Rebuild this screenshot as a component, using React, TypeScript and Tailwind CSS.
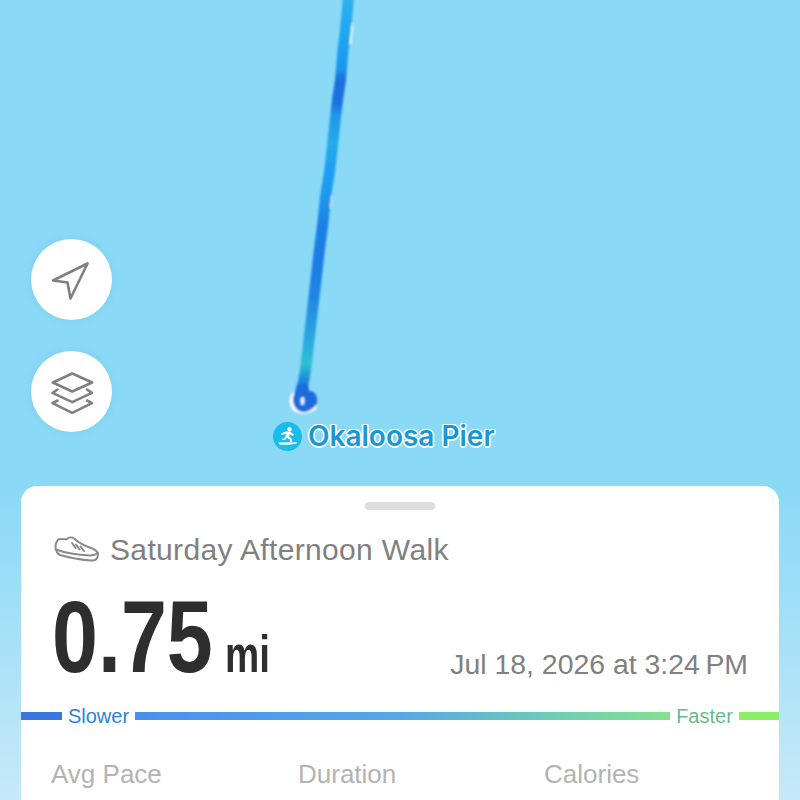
const SANS = "font-['Liberation_Sans',Arial,sans-serif]";

function Route() {
  return (
    <svg className="absolute left-0 top-0" width="800" height="486" viewBox="0 0 800 486" fill="none">
      <defs>
        <linearGradient id="route" gradientUnits="userSpaceOnUse" x1="0" y1="0" x2="0" y2="400">
          <stop offset="0" stopColor="#2bb0ee" />
          <stop offset="0.1" stopColor="#1ea5ee" />
          <stop offset="0.17" stopColor="#1d96ec" />
          <stop offset="0.2" stopColor="#1c70de" />
          <stop offset="0.26" stopColor="#1d72de" />
          <stop offset="0.29" stopColor="#1e9ae8" />
          <stop offset="0.36" stopColor="#25aaea" />
          <stop offset="0.42" stopColor="#1ea0f2" />
          <stop offset="0.5" stopColor="#1d98ee" />
          <stop offset="0.56" stopColor="#1a80e4" />
          <stop offset="0.65" stopColor="#1c7de2" />
          <stop offset="0.74" stopColor="#1e86e4" />
          <stop offset="0.82" stopColor="#2a9fe0" />
          <stop offset="0.88" stopColor="#2cb4dc" />
          <stop offset="0.91" stopColor="#2ec0d0" />
          <stop offset="0.95" stopColor="#1e88e0" />
          <stop offset="1" stopColor="#1b6cdc" />
        </linearGradient>
        <filter id="soft" x="-20%" y="-5%" width="140%" height="110%">
          <feGaussianBlur stdDeviation="0.8" />
        </filter>
      </defs>
      <g filter="url(#soft)">
        <path d="M352 24 L350.500 44" stroke="#fff" strokeWidth="2" />
        <path d="M331 196 L330 208" stroke="#fff" strokeWidth="2" />
        <path d="M293 392 C288 397 288 408 296 412 C302 415 311 414 317 408 L312 400 L296 396 Z" fill="#fff" />
        <path
          d="M348.500 -3 L347 14 L345.500 30 L343 50 L340.500 80 L337.500 100 L335 122 L332 150 L329.500 172 L325.500 197 L323 222 L319 253 L316 280 L312.500 310 L309 340 L305.500 370 L302 390"
          stroke="url(#route)"
          strokeWidth="11"
          strokeLinejoin="round"
          strokeLinecap="round"
        />
        <path
          d="M297 384 L308 384 L309 391 C314 390 318 396 317 402 C315.500 408 308 413 302 412 C296 411 292.500 404 293 399 C293.500 394 296 391 297 384 Z"
          fill="#1b6cdc"
        />
        <ellipse cx="302.500" cy="401" rx="2" ry="4" fill="#e8f6ff" />
      </g>
    </svg>
  );
}

function PierLabel() {
  return (
    <div className="absolute left-[273px] top-[421px] flex items-center gap-[6px]">
      <div className="flex h-[29px] w-[29px] items-center justify-center rounded-full bg-[#19bdeb]">
        <svg width="21" height="21" viewBox="0 0 21 21" fill="#fff">
          <circle cx="12.500" cy="3.200" r="2.200" />
          <path d="M4 7.500 L9 5.600 L13 5.600 L17 8.600 L16 10 L12.800 8.200 L12 10.600 L14.800 12.800 L14.800 16 L13 16 L12.800 13.600 L9.600 11.800 L8 14 L5.400 14 L5.400 12.600 L7.200 12.400 L9.600 7.800 L4.600 9 Z" />
          <path d="M1 16.600 L20 16.200 L20 17.200 C15 18.800 7 19 2.500 18.400 Z" />
        </svg>
      </div>
      <span className="font-['Inter',sans-serif] text-[28px] font-semibold leading-[30px] text-[#1897d6] whitespace-nowrap [text-shadow:1.5px_0_0_#fff,-1.5px_0_0_#fff,0_1.5px_0_#fff,0_-1.5px_0_#fff,1px_1px_0_#fff,-1px_-1px_0_#fff,1px_-1px_0_#fff,-1px_1px_0_#fff]">
        Okaloosa Pier
      </span>
    </div>
  );
}

function MapButton({ children }: { children: React.ReactNode }) {
  return (
    <div className="flex h-[81px] w-[81px] items-center justify-center rounded-full bg-white shadow-[0_0_8px_rgba(60,120,150,0.12)]">
      {children}
    </div>
  );
}

function Shoe() {
  return (
    <svg className="mb-[3px]" width="46" height="28" viewBox="0 0 46 28" fill="none" stroke="#8a8a8a" strokeWidth="2" strokeLinejoin="round" strokeLinecap="round">
      <path d="M2 15 C1 11 2 7 4 4.500 C7 3 11 5 13 4 C15 2 18 2 20 3.500 C25 8 31 11 37 13 C41 14.500 44 16 44 19.500 C44 24 41 26 37 25.500 C27 25 15 22.500 6 20 C4 19 2.500 17 2 15 Z" />
      <path d="M2 14.500 C10 17.500 24 20 36 20.500 C39 20.500 42 19.500 44 18" />
      <path d="M18 8 L21.500 13 M22 9.500 L25.500 14.500 M26.500 11.500 L30 16" />
    </svg>
  );
}

export default function App() {
  return (
    <div className={`flex h-[800px] w-[800px] flex-col overflow-hidden bg-[linear-gradient(to_bottom,#8ad9f7_0,#8ad9f7_490px,#c6e9f7_800px)] ${SANS}`}>
      <div className="relative h-[486px] shrink-0 pl-[31px] pt-[239px]">
        <Route />
        <PierLabel />
        <div className="relative flex w-[81px] flex-col gap-[31px]">
          <MapButton>
            <svg width="40" height="40" viewBox="0 0 40 40" fill="none" stroke="#808080" strokeWidth="2.600" strokeLinejoin="round" strokeLinecap="round">
              <path d="M35.500 3.500 L1 20.500 L15.500 22.500 L18.500 38.500 Z" />
            </svg>
          </MapButton>
          <MapButton>
            <svg className="overflow-visible" width="42" height="42" viewBox="0 0 42 42" fill="none" stroke="#808080" strokeWidth="2.600" strokeLinejoin="round" strokeLinecap="round">
              <path d="M21.200 2.500 L41.200 11.500 L21.200 20.500 L1.800 11.500 Z" />
              <path d="M6.500 18.500 L1.500 21.800 L21.200 31.200 L41 21.800 L36 18.500" />
              <path d="M6.500 29.500 L1.500 32.200 L21.200 41.800 L41 32.200 L36 29.500" />
            </svg>
          </MapButton>
        </div>
      </div>

      <div className="mx-[21px] flex flex-1 flex-col rounded-t-[16px] bg-white">
        <div className="mx-auto mt-[16px] h-[8px] w-[70px] rounded-full bg-[#dedede]" />
        <div className="ml-[33px] mt-[24px] flex h-[32px] items-center gap-[10px]">
          <Shoe />
          <span className="text-[30px] leading-[32px] tracking-[0.35px] text-[#808080] whitespace-nowrap">Saturday Afternoon Walk</span>
        </div>
        <div className="ml-[31px] mr-[31px] mt-[16px] flex h-[110px] items-end justify-between">
          <div className="flex items-baseline gap-[13px] text-[#2e2e2e]">
            <span className="inline-block w-[160px] origin-left scale-x-[0.81] whitespace-nowrap text-[102px] font-bold leading-[110px]">0.75</span>
            <span className="inline-block w-[45px] origin-left scale-x-[0.74] whitespace-nowrap text-[52px] font-bold leading-[50px]">mi</span>
          </div>
          <span className="mb-[12px] text-[28.4px] leading-[32px] text-[#808080] whitespace-nowrap">Jul 18, 2026 at 3:24{"\u2009"}PM</span>
        </div>
        <div className="mt-[12px] flex h-[24px] items-center">
          <div className="h-[8px] w-[41px] bg-[#3b78de]" />
          <span className="w-[73px] text-center text-[20px] leading-[24px] text-[#2d84d8]">Slower</span>
          <div className="h-[8px] flex-1 bg-[linear-gradient(to_right,#4791ec,#55a9e6_50%,#6fcfb4_80%,#84e08e)]" />
          <span className="w-[69px] text-center text-[20px] leading-[24px] text-[#6ab98a]">Faster</span>
          <div className="h-[8px] w-[40px] bg-[#8cee66]" />
        </div>
        <div className="mt-[31px] grid grid-cols-[247px_246px_1fr] pl-[30px] text-[26px] leading-[30px] text-[#b3b3b3]">
          <span>Avg Pace</span>
          <span>Duration</span>
          <span>Calories</span>
        </div>
      </div>
    </div>
  );
}
